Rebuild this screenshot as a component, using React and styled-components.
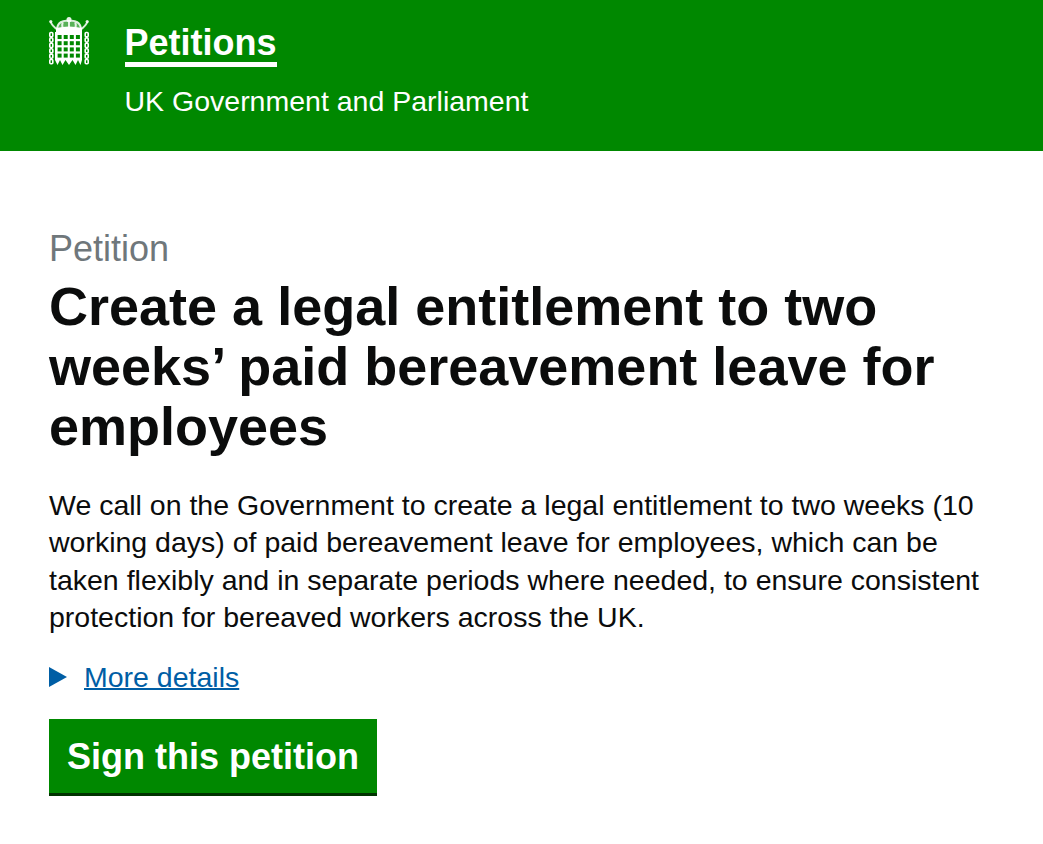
import styled, { createGlobalStyle } from "styled-components";

const GlobalStyle = createGlobalStyle`
	* {
		box-sizing: border-box;
	}
	html, body {
		margin: 0;
		padding: 0;
		background: #fff;
	}
	body {
		font-family: "Liberation Sans", Arial, sans-serif;
		color: #0b0c0c;
	}
`;

const GRID_ROWS = [0, 1, 2, 3];
const GRID_COLS = [0, 1, 2, 3];
const CHAIN_LINKS = [0, 1, 2, 3, 4, 5];

const Portcullis = () => (
	<svg width="40" height="50" viewBox="0 0 40 50" aria-hidden="true">
		{/* crown */}
		<path d="M8 13 C7 7 12 4 20 4 C28 4 33 7 32 13 Z" fill="#fff" opacity="0.35" />
		<path
			d="M1.5 4.5 C3 9 6 11 9 13 M38.5 4.5 C37 9 34 11 31 13 M20 4 C14 3 8 5 8 13 M20 4 C26 3 32 5 32 13 M20 4 V12 M14 5 C12.5 8 13.5 11 14.5 13 M26 5 C27.5 8 26.5 11 25.5 13"
			fill="none"
			stroke="#fff"
			strokeWidth="2"
			opacity="0.85"
		/>
		<path d="M7 11 Q20 8 33 11 L33 15 H7 Z" fill="#fff" />
		<circle cx="20" cy="2.5" r="2.5" fill="#fff" opacity="0.9" />
		<circle cx="1.8" cy="4.5" r="1.6" fill="#fff" opacity="0.85" />
		<circle cx="38.2" cy="4.5" r="1.6" fill="#fff" opacity="0.85" />
		{/* gate */}
		<path d="M6 15 H33 V43 L31.5 48 L29 43 L26.5 48 L23.5 43 L20 48 L16.5 43 L13.5 48 L11 43 L8.5 48 L6 43 Z" fill="#fff" />
		{GRID_ROWS.map((row) =>
			GRID_COLS.map((col) => (
				<rect
					key={`${row}-${col}`}
					x={8.6 + col * 6.1}
					y={18 + row * 6.2}
					width="4"
					height="4"
					fill="#008800"
				/>
			))
		)}
		{/* side chains */}
		{CHAIN_LINKS.map((i) => (
			<g key={i} fill="none" stroke="#fff" strokeWidth="1.6">
				<rect x="0.8" y={15.5 + i * 5.4} width="3" height="4.2" rx="1" />
				<rect x="36.2" y={15.5 + i * 5.4} width="3" height="4.2" rx="1" />
			</g>
		))}
	</svg>
);

const App = () => (
	<>
		<GlobalStyle />
		<Header>
			<Crest>
				<Portcullis />
			</Crest>
			<Brand>
				<BrandLink href="#">Petitions</BrandLink>
				<BrandSub>UK Government and Parliament</BrandSub>
			</Brand>
		</Header>
		<Main>
			<Kicker>Petition</Kicker>
			<Title>Create a legal entitlement to two weeks’ paid bereavement leave for employees</Title>
			<Body>
				We call on the Government to create a legal entitlement to two weeks (10 working days) of paid
				bereavement leave for employees, which can be taken flexibly and in separate periods where needed,
				to ensure consistent protection for bereaved workers across the UK.
			</Body>
			<Details>
				<Arrow />
				<DetailsLink href="#">More details</DetailsLink>
			</Details>
			<SignButton href="#">Sign this petition</SignButton>
		</Main>
	</>
);

export default App;

const Header = styled.header`
	display: flex;
	height: 151px;
	background: #008800;
	color: #fff;
	padding: 17px 0 0 49px;
	gap: 35.5px;
`;

const Crest = styled.div`
	width: 40px;
	height: 50px;
`;

const Brand = styled.div`
	display: flex;
	flex-direction: column;
	align-items: flex-start;
`;

const BrandLink = styled.a`
	font-size: 36px;
	font-weight: 700;
	line-height: 39px;
	margin-top: 6px;
	color: #fff;
	text-decoration: none;
	border-bottom: 5px solid #fff;
`;

const BrandSub = styled.div`
	font-size: 28.5px;
	line-height: 34px;
	margin-top: 17px;
`;

const Main = styled.main`
	padding: 79px 49px 0;
`;

const Kicker = styled.div`
	font-size: 36px;
	line-height: 38px;
	color: #6f777b;
`;

const Title = styled.h1`
	margin: 8px 0 0;
	font-size: 54px;
	line-height: 60px;
	font-weight: 700;
	color: #0b0c0c;
`;

const Body = styled.p`
	margin: 30.5px 0 0;
	font-size: 28.5px;
	line-height: 37.5px;
`;

const Details = styled.div`
	display: flex;
	align-items: center;
	gap: 17px;
	margin-top: 23px;
`;

const Arrow = styled.span`
	width: 0;
	height: 0;
	border-style: solid;
	border-width: 10px 0 10px 18px;
	border-color: transparent transparent transparent #005ea5;
`;

const DetailsLink = styled.a`
	font-size: 28.5px;
	line-height: 34px;
	color: #005ea5;
	text-decoration: underline;
	text-decoration-thickness: 2px;
`;

const SignButton = styled.a`
	display: inline-block;
	margin-top: 25px;
	padding: 14px 18px 13px;
	background: #008800;
	color: #fff;
	font-size: 36px;
	font-weight: 700;
	line-height: 47px;
	text-decoration: none;
	border-bottom: 3px solid #003300;
`;
